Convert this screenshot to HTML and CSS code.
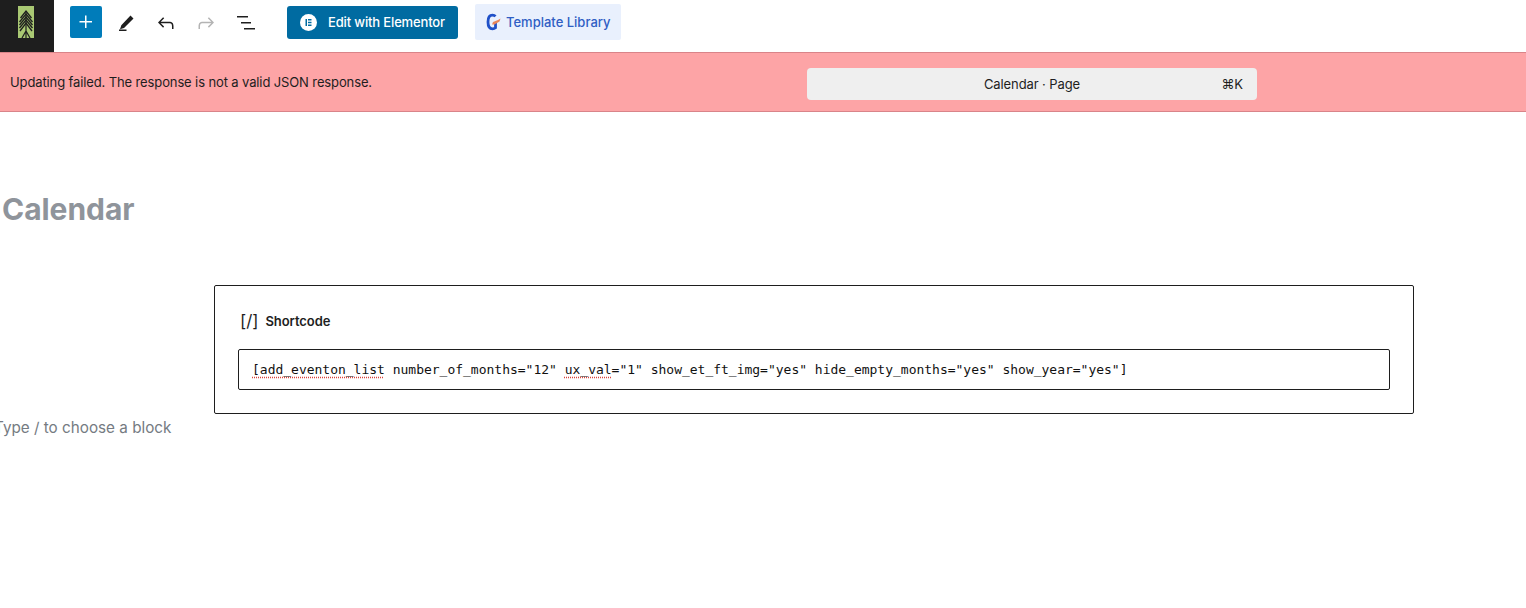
FILE: index.html
```html
<!doctype html>
<html lang="en">
  <head>
    <meta charset="UTF-8" />
    <title>Calendar · Page</title>
    <link rel="stylesheet" href="styles.css">
  </head>
  <body>
    <header class="toolbar">
      <div class="site-logo">
        <svg width="16" height="32" viewBox="0 0 16 32">
          <path d="M0 0h16v32H0z" fill="#a9c873" />
          <path d="M2.500 12 8 5l5.500 7M1.500 16 8 8l6.500 8M1.500 19 8 11l6.500 8M1.500 22 8 14l6.500 8M2 25l6-8 6 8" fill="none" stroke="#1e1e1e" stroke-width="1.3" />
          <path d="M8 5v27M4 32l4-7 4 7" fill="none" stroke="#1e1e1e" stroke-width="1.2" />
        </svg>
      </div>
      <div class="tools">
        <button class="add-btn">
          <svg width="24" height="24" viewBox="0 0 24 24"><path d="M11 12.500V18h1.500v-5.500H18V11h-5.500V5.500H11V11H5.500v1.500z" fill="#fff" /></svg>
        </button>
        <span class="tool pencil">
          <svg width="24" height="24" viewBox="0 0 24 24"><path d="m19.500 7.500-3-3-9.200 9.800-1.300 4 4-1.300zM5 20h7.500v-1.500H5z" fill="#1e1e1e" /></svg>
        </span>
        <span class="tool">
          <svg width="24" height="24" viewBox="0 0 24 24"><path d="M18.300 11.700c-.6-.6-1.400-.9-2.300-.9H6.700l3.500-3.500-1.100-1L4 11.500l5.100 5.200 1-1.100-3.400-3.300H16c.5 0 .9.200 1.300.5.400.4.700 1.200.7 2.400v2.800h1.500v-2.800c0-1.600-.4-2.800-1.200-3.500z" fill="#1e1e1e" /></svg>
        </span>
        <span class="tool">
          <svg width="24" height="24" viewBox="0 0 24 24"><path d="M5.700 11.700c.6-.6 1.400-.9 2.300-.9h9.300l-3.500-3.500 1.100-1 5.100 5.200-5.100 5.200-1-1.100 3.400-3.300H8c-.5 0-.9.200-1.300.5-.4.400-.7 1.200-.7 2.400v2.800H4.500v-2.800c0-1.600.4-2.800 1.200-3.500z" fill="#b4b4b4" /></svg>
        </span>
        <span class="tool">
          <svg width="24" height="24" viewBox="0 0 24 24"><path d="M3 5h11v1.500H3zM7 11h10v1.500H7zM10 17h11v1.500H10z" fill="#1e1e1e" /></svg>
        </span>
        <button class="elementor-btn">
          <svg width="17" height="17" viewBox="0 0 17 17">
            <circle cx="8.500" cy="8.500" r="8.500" fill="#fff" />
            <path d="M5.500 5h1.500v7H5.500zM8 5h3.500v1.400H8zM8 7.800h3.500v1.400H8zM8 10.600h3.500V12H8z" fill="#006ba1" />
          </svg>
          <span>Edit with Elementor</span>
        </button>
        <button class="library-btn">
          <svg width="20" height="20" viewBox="0 0 20 20">
            <path d="M11.500 4.300C10.800 3.500 9.800 3.200 8.500 3.200 5.500 3.200 4 6 4 10s1.500 6.800 4.500 6.800c1.300 0 2.200-.3 3-1V11" fill="none" stroke="#1f50c8" stroke-width="2.800" />
            <path d="M8 12.500 9 10l5-2 2.500-1.500-1 3-5 3z" fill="#e8855a" />
          </svg>
          <span>Template Library</span>
        </button>
      </div>
    </header>

    <div class="notice">
      <p class="notice-text">Updating failed. The response is not a valid JSON response.</p>
      <div class="command-bar">
        <span class="command-title">Calendar · Page</span>
        <span class="command-key">⌘K</span>
      </div>
    </div>

    <main class="editor">
      <h1 class="page-title">Calendar</h1>
      <section class="shortcode">
        <div class="shortcode-label">
          <span class="shortcode-icon">[/]</span>
          <span>Shortcode</span>
        </div>
        <div class="shortcode-input"><span class="typo">[add_eventon_list</span> number_of_months="12" <span class="typo">ux_val</span>="1" show_et_ft_img="yes" hide_empty_months="yes" show_year="yes"]</div>
      </section>
      <p class="placeholder">Type / to choose a block</p>
    </main>
  </body>
</html>
```

FILE: styles.css
```css
* {
  box-sizing: border-box;
}
html,
body {
  height: 100%;
}
body {
  margin: 0;
  font-family: Inter, "Liberation Sans", Arial, sans-serif;
  background: #fff;
  color: #1e1e1e;
  overflow: hidden;
}
button {
  font-family: inherit;
  border: none;
  cursor: pointer;
}
.toolbar {
  display: flex;
  height: 52px;
  background: #fff;
}
.site-logo {
  width: 54px;
  height: 52px;
  background: #1e1e1e;
  display: flex;
  align-items: flex-start;
  justify-content: center;
  padding: 6px 2px 0 0;
}
.tools {
  display: flex;
  align-items: center;
  padding-left: 16px;
}
.add-btn {
  width: 32px;
  height: 32px;
  margin-top: -8px;
  padding: 4px;
  background: #007cba;
  border-radius: 2px;
}
.tool {
  width: 24px;
  height: 24px;
  margin-left: 16px;
  margin-top: -6px;
}
.pencil {
  margin-left: 12px;
}
.elementor-btn {
  display: flex;
  align-items: center;
  gap: 11px;
  height: 33px;
  width: 171px;
  margin-left: 29px;
  margin-top: -8px;
  padding: 0 0 0 13px;
  background: #006ba1;
  color: #fff;
  font-size: 13px;
  font-weight: 500;
  letter-spacing: -0.15px;
  border-radius: 3px;
}
.library-btn {
  display: flex;
  align-items: center;
  gap: 2px;
  height: 36px;
  width: 146px;
  margin-left: 17px;
  margin-top: -8px;
  padding: 0 0 0 9px;
  background: #e9f0fd;
  color: #2f5ec4;
  font-size: 13px;
  font-weight: 500;
  border-radius: 2px;
}
.notice {
  display: flex;
  align-items: center;
  height: 60px;
  background: #fda4a6;
  border-top: 1px solid #d98489;
  border-bottom: 1px solid #d98489;
  position: relative;
}
.notice-text {
  margin: -1px 0 0 10px;
  font-size: 13px;
  letter-spacing: -0.12px;
}
.command-bar {
  position: absolute;
  left: 807px;
  top: 15px;
  width: 450px;
  height: 32px;
  display: flex;
  align-items: center;
  justify-content: center;
  background: #efefef;
  border-radius: 4px;
  font-size: 13px;
  letter-spacing: -0.1px;
}
.command-key {
  position: absolute;
  right: 14px;
}
.page-title {
  margin: 77px 0 0 2px;
  font-size: 30px;
  line-height: 40px;
  font-weight: 700;
  letter-spacing: -0.05px;
  color: #8f949b;
}
.shortcode {
  width: 1200px;
  height: 129px;
  margin: 56px 0 0 214px;
  padding: 23px 23px;
  border: 1px solid #1e1e1e;
  border-radius: 2px;
}
.shortcode-label {
  display: flex;
  align-items: center;
  gap: 7px;
  height: 24px;
  font-size: 13px;
  font-weight: 600;
  letter-spacing: -0.05px;
}
.shortcode-icon {
  font-size: 17px;
  font-weight: 400;
  padding-left: 2px;
}
.shortcode-input {
  height: 41px;
  margin-top: 16px;
  padding: 0 13px;
  line-height: 39px;
  border: 1px solid #1e1e1e;
  border-radius: 2px;
  font-family: "DejaVu Sans Mono", monospace;
  font-size: 13px;
  letter-spacing: -0.01px;
  color: #111;
  white-space: nowrap;
}
.typo {
  text-decoration: underline dotted #d9453d;
  text-underline-offset: 3px;
}
.placeholder {
  margin: 2px 0 0 -6px;
  font-size: 15.25px;
  line-height: 24px;
  color: #757b82;
}
```
